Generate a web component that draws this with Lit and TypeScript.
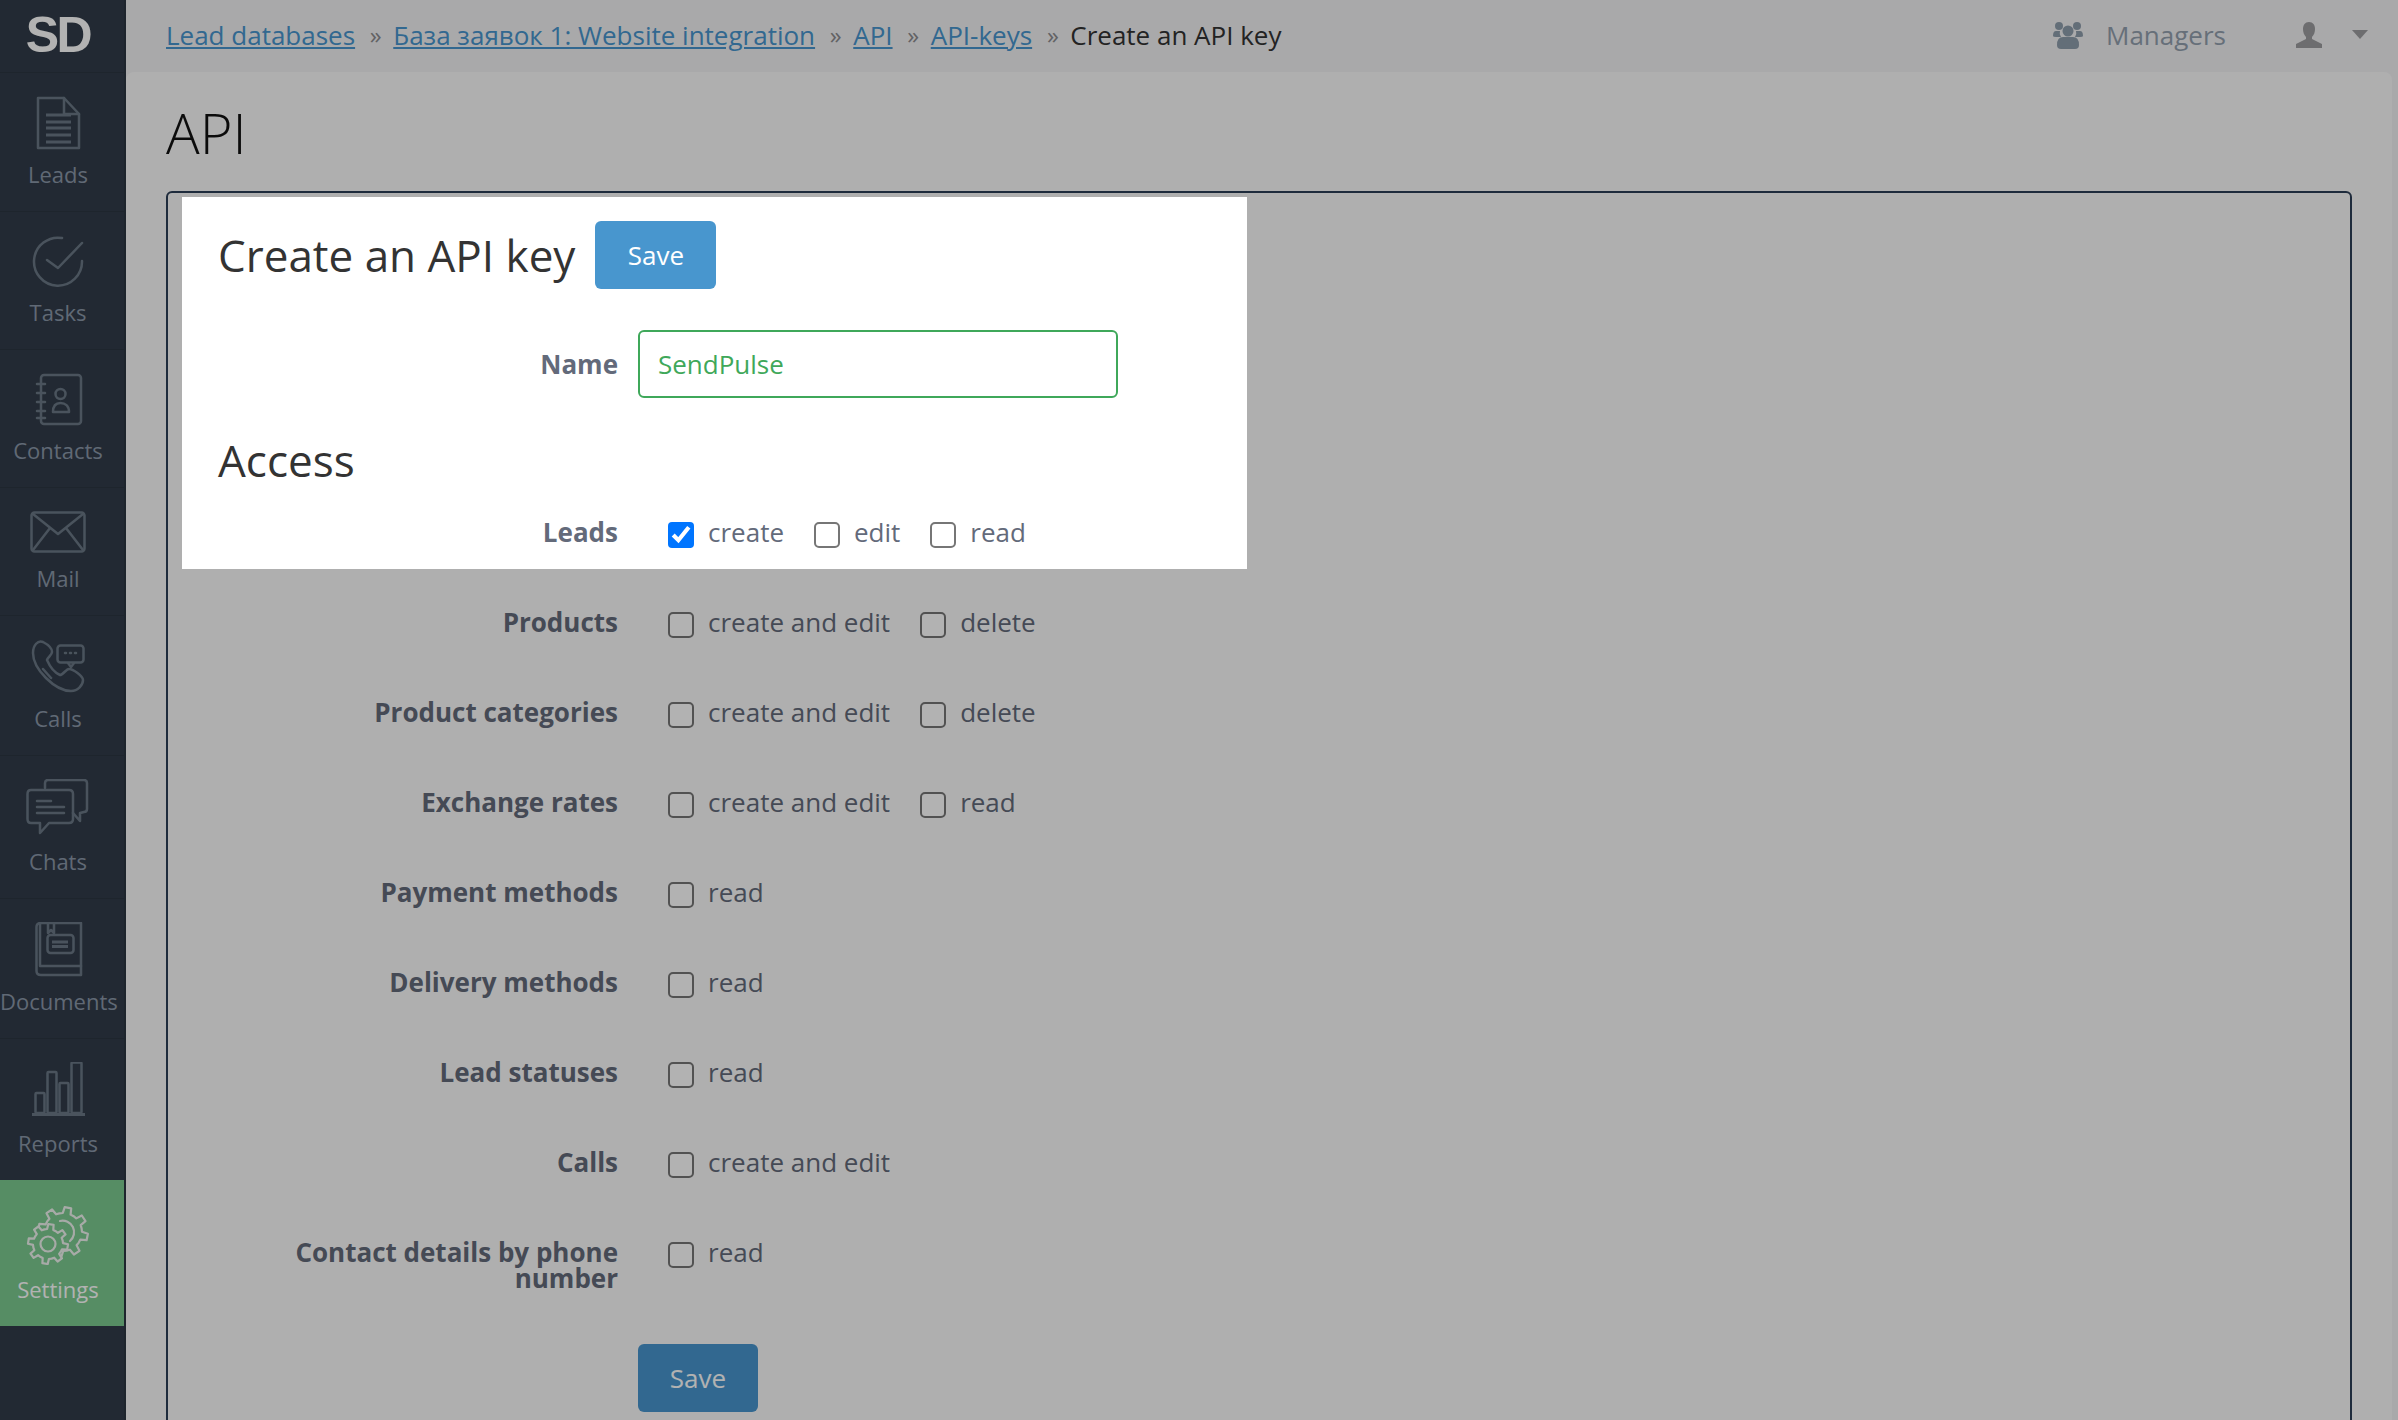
import { LitElement, html, css, svg } from "lit";
import { customElement } from "lit/decorators.js";

const gear = (cx: number, cy: number, ro: number, ri: number, n: number, phase = 0) => {
  const pts: string[] = [];
  const step = (Math.PI * 2) / n;
  for (let i = 0; i < n; i++) {
    const a = phase + i * step;
    const seq: [number, number][] = [
      [ri, a - step * 0.5],
      [ri, a - step * 0.27],
      [ro, a - step * 0.17],
      [ro, a + step * 0.17],
      [ri, a + step * 0.27],
    ];
    for (const [r, t] of seq) pts.push(`${(cx + r * Math.cos(t)).toFixed(1)} ${(cy + r * Math.sin(t)).toFixed(1)}`);
  }
  return "M" + pts.join("L") + "Z";
};

const icons: Record<string, ReturnType<typeof svg>> = {
  Leads: svg`<path d="M38 2H64L79 18V52H38Z"/><path d="M64 2V18H79"/><path class="thick" d="M46 19H71M46 26H71M46 32H71M46 39H71M46 46H71"/>`,
  Tasks: svg`<path d="M62 3A24 24 0 1 0 82 26"/><path d="M47 25L58 33L82 8"/>`,
  Contacts: svg`<rect x="41" y="2" width="40" height="49" rx="3"/><path d="M37 11H45M37 20H45M37 29H45M37 38H45M37 45H45"/><circle cx="60.500" cy="21" r="5"/><path d="M53 39C53 33 56 30 60.500 30C65 30 69 33 69 39Z"/>`,
  Mail: svg`<rect x="31.500" y="1.500" width="53" height="39" rx="3"/><path d="M33 3L58 23L83 3M33 39L50 17M83 39L66 17"/>`,
  Calls: svg`<path d="M43 3C38 1 33 6 33 14C33 30 55 52 71 52C78 52 83 46 83 41C83 37 73 30 69 30C66 30 63 36 60 36C53 33 50 28 47 21C48 18 52 16 52 13C52 9 47 5 43 3Z"/><path d="M43 30L51 39"/><rect class="fillbg" x="57.500" y="6.500" width="26" height="17" rx="3"/><path d="M68 24L71 28L74 24"/><path d="M65 14H66M70 14H71M75 14H76"/>`,
  Chats: svg`<path d="M45 9V4Q45 1 48 1H84Q87 1 87 4V30Q87 33 84 33L80 34V42L73 34"/><path d="M31 11H69Q73 11 73 15V40Q73 44 69 44H49L40 54V44H31Q27.500 44 27.500 40V15Q27.500 11 31 11Z"/><path d="M37 22H51M37 28H64M37 34H64"/>`,
  Documents: svg`<path d="M41 1H81V53H41Q36.500 53 36.500 49V5Q36.500 1 41 1Z"/><path d="M40 1V44M41 44H81"/><path d="M48 1V11L51 8L54 11V1"/><rect x="47.500" y="13" width="26" height="18" rx="3"/><path class="thick" d="M52 20H68M52 24.500H68"/>`,
  Reports: svg`<rect x="35.500" y="31" width="9" height="20" rx="1"/><rect x="47.500" y="10" width="9" height="41" rx="1"/><rect x="59.500" y="21" width="9" height="30" rx="1"/><rect x="71.500" y="0.500" width="10" height="50.500" rx="1"/><path class="thick" d="M32 52.500H85"/>`,
  Settings: svg`<path d="${gear(63, 28, 25, 19, 8, 0.2)}"/><path d="M60 17A11.500 11.500 0 0 1 70 37"/><path class="fillactive" d="${gear(48, 40, 20, 15, 8, 0.15)}"/><circle cx="48" cy="40" r="7.500"/>`,
};

const nav = [
  { name: "Leads", h: 54 },
  { name: "Tasks", h: 53 },
  { name: "Contacts", h: 53 },
  { name: "Mail", h: 43 },
  { name: "Calls", h: 55 },
  { name: "Chats", h: 58 },
  { name: "Documents", h: 55 },
  { name: "Reports", h: 57 },
  { name: "Settings", h: 61, active: true },
];

const crumbs = ["Lead databases", "База заявок 1: Website integration", "API", "API-keys"];

const rows: { label: string; opts: string[] }[] = [
  { label: "Products", opts: ["create and edit", "delete"] },
  { label: "Product categories", opts: ["create and edit", "delete"] },
  { label: "Exchange rates", opts: ["create and edit", "read"] },
  { label: "Payment methods", opts: ["read"] },
  { label: "Delivery methods", opts: ["read"] },
  { label: "Lead statuses", opts: ["read"] },
  { label: "Calls", opts: ["create and edit"] },
  { label: "Contact details by phone number", opts: ["read"] },
];

@customElement("app-root")
export class AppRoot extends LitElement {
  static styles = css`
    :host {
      display: block;
      height: 100vh;
      overflow: hidden;
      font-family: "Open Sans", sans-serif;
      font-size: 26px;
      color: #333;
    }
    * { box-sizing: border-box; }
    .shell { display: flex; height: 100vh; background: #f2f2f4; }
    .side {
      width: 126px;
      flex: none;
      background: #323c49;
      border-right: 2px solid #2c3641;
    }
    .logo {
      height: 72px;
      width: 116px;
      display: flex;
      align-items: center;
      justify-content: center;
      font-family: "Liberation Sans", sans-serif;
      font-weight: 700;
      font-size: 50px;
      letter-spacing: -2.500px;
      color: #fff;
      line-height: 1;
      padding-bottom: 2px;
    }
    .item {
      display: flex;
      flex-direction: column;
      align-items: stretch;
      padding: 23px 8px 25px 0;
      border-top: 1px solid #2c3641;
      color: #8a97a8;
      font-size: 22px;
      line-height: 24px;
      text-align: center;
    }
    .item svg {
      display: block;
      width: 116px;
      margin-bottom: 12px;
      fill: none;
      stroke: #6a7886;
      stroke-width: 2.500;
      stroke-linejoin: round;
      stroke-linecap: round;
    }
    .item svg .thick { stroke-width: 3; stroke-linecap: butt; }
    .item svg .fillbg { fill: #323c49; }
    .item.active {
      background: #7bcb90;
      color: #fff;
      border-top-color: #7bcb90;
    }
    .item.active svg { stroke: #f0f4f0; stroke-width: 2.200; }
    .item.active svg .fillactive { fill: #7bcb90; }
    .main { flex: 1; min-width: 0; display: flex; flex-direction: column; }
    .top {
      height: 72px;
      flex: none;
      display: flex;
      align-items: center;
      padding: 0 30px 3px 40px;
      line-height: 36px;
    }
    .crumbs { display: flex; align-items: center; flex: 1; }
    .crumbs a { color: #4896ce; text-decoration: underline; }
    .sep { color: #8d8d90; margin: 0 11.500px 0 14.750px; font-size: 24px; }
    .tools { display: flex; align-items: center; color: #92a0ae; }
    .tools svg { display: block; fill: #8f9eac; }
    .tools .mgr { margin-left: 23px; }
    .tools .user { margin-left: 70px; fill: #9d9d9f; }
    .caret {
      margin-left: 30px;
      width: 0;
      height: 0;
      border-left: 8px solid transparent;
      border-right: 8px solid transparent;
      border-top: 9px solid #9d9d9f;
    }
    .content {
      flex: 1;
      min-height: 0;
      margin-right: 6px;
      background: #fbfbfb;
      border-radius: 8px 8px 0 0;
      padding: 0 40px;
      overflow: hidden;
    }
    h1 {
      margin: 0;
      font-weight: 300;
      font-size: 56px;
      line-height: 76px;
      height: 119px;
      padding-top: 22px;
      color: #111;
    }
    .box {
      border: 2px solid #2c3e56;
      border-radius: 6px;
      padding: 4px 14px 0;
      height: 1400px;
    }
    .spot {
      position: relative;
      z-index: 11;
      background: #fff;
      width: 1065px;
      padding-top: 24px;
    }
    .head { display: flex; align-items: center; padding-left: 36px; }
    h2 {
      margin: 0;
      font-weight: 400;
      font-size: 44px;
      line-height: 68px;
      color: #333;
    }
    h2.access { padding: 32px 0 0 36px; height: 121px; line-height: 60px; }
    .btn {
      height: 68px;
      width: 121px;
      border: 0;
      border-radius: 6px;
      background: #4896ce;
      color: #fff;
      font: 400 26px "Open Sans", sans-serif;
      padding: 0;
    }
    .head .btn { margin-left: 20px; }
    .form-row { display: flex; margin-top: 41px; }
    .row { display: flex; padding: 40px 0 24px; }
    .row.first { padding-top: 0; }
    .label {
      width: 340px;
      margin-left: 96px;
      flex: none;
      text-align: right;
      font-weight: 700;
      color: #636a7a;
      line-height: 26px;
    }
    .form-row .label { line-height: 68px; }
    .field {
      margin-left: 20px;
      width: 480px;
      height: 68px;
      border: 2px solid #3fa85a;
      border-radius: 6px;
      padding: 0 18px;
      font: 400 26px "Open Sans", sans-serif;
      color: #3fa85a;
      outline: none;
      background: #fff;
    }
    .opts { display: flex; margin-left: 50px; line-height: 26px; color: #636a7a; }
    .opt { display: flex; margin-right: 30px; }
    .opt input {
      zoom: 2;
      width: 13px;
      height: 13px;
      margin: 1.500px 7px -1.500px 0;
      flex: none;
    }
    .save-row { padding-left: 456px; margin-top: 29px; }
    .save-row .btn { width: 120px; }
    .veil {
      position: fixed;
      inset: 0;
      background: rgba(0, 0, 0, 0.3);
      z-index: 10;
    }
  `;

  private opt(name: string, checked = false) {
    return html`<label class="opt"><input type="checkbox" .checked=${checked} />${name}</label>`;
  }

  render() {
    return html`
      <div class="shell">
        <nav class="side">
          <div class="logo">SD</div>
          ${nav.map(
            (n) => html`<div class="item ${n.active ? "active" : ""}">
              <svg viewBox="0 0 116 ${n.h}" height=${n.h}>${icons[n.name]}</svg>
              <span>${n.name}</span>
            </div>`
          )}
        </nav>
        <div class="main">
          <header class="top">
            <div class="crumbs">
              ${crumbs.map(
                (c) => html`<a href="#">${c}</a><span class="sep">»</span>`
              )}
              <span>Create an API key</span>
            </div>
            <div class="tools">
              <svg width="30" height="28" viewBox="0 0 30 28">
                <circle cx="6" cy="5" r="4"/><circle cx="24" cy="5" r="4"/>
                <path d="M0 15Q0 10 3 10H7Q6 13 8 16H3Q0 16 0 15ZM30 15Q30 10 27 10H23Q24 13 22 16H27Q30 16 30 15Z"/>
                <circle cx="15" cy="10" r="5.500"/>
                <path d="M4 24Q4 16 10 16H20Q26 16 26 24Q26 28 22 28H8Q4 28 4 24Z"/>
              </svg>
              <span class="mgr">Managers</span>
              <svg class="user" width="26" height="26" viewBox="0 0 26 26">
                <path d="M13 0C17 0 19 3 19 7C19 10 18 13 16 15V17L26 22V26H0V22L10 17V15C8 13 7 10 7 7C7 3 9 0 13 0Z"/>
              </svg>
              <span class="caret"></span>
            </div>
          </header>
          <main class="content">
            <h1>API</h1>
            <div class="box">
              <div class="spot">
                <div class="head">
                  <h2>Create an API key</h2>
                  <button class="btn">Save</button>
                </div>
                <div class="form-row">
                  <div class="label">Name</div>
                  <input class="field" value="SendPulse" />
                </div>
                <h2 class="access">Access</h2>
                <div class="row first">
                  <div class="label">Leads</div>
                  <div class="opts">${this.opt("create", true)}${this.opt("edit")}${this.opt("read")}</div>
                </div>
              </div>
              ${rows.map(
                (r) => html`<div class="row">
                  <div class="label">${r.label}</div>
                  <div class="opts">${r.opts.map((o) => this.opt(o))}</div>
                </div>`
              )}
              <div class="save-row"><button class="btn">Save</button></div>
            </div>
          </main>
        </div>
      </div>
      <div class="veil"></div>
    `;
  }
}
